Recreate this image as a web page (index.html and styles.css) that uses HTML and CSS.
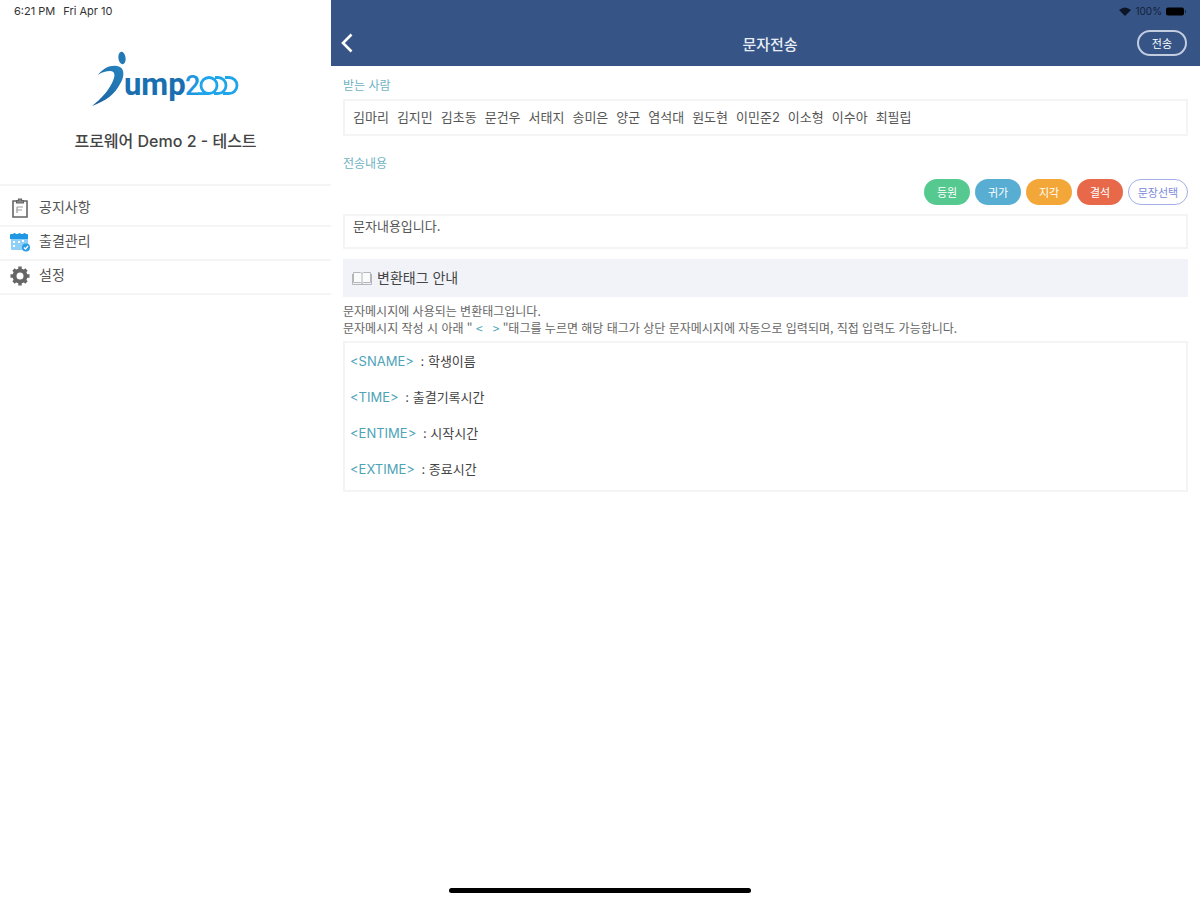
FILE: index.html
```
<!DOCTYPE html>
<html lang="ko">
<head>
    <meta charset="UTF-8">
    <meta name="viewport" content="width=device-width, initial-scale=1">
    <title>문자전송</title>
    <link rel="stylesheet" href="styles.css">
</head>
<body>
    <div class="app">
        <aside class="sidebar">
            <div class="status">
                <span>6:21 PM</span>
                <span>Fri Apr 10</span>
            </div>
            <div class="brand">
                <svg class="logo" width="150" height="58" viewBox="90 50 150 58" role="img" aria-label="Jump2000">
                    <defs>
                        <linearGradient id="body" x1="0" y1="1" x2="1" y2="0">
                            <stop offset="0" stop-color="#1c5f9e"/>
                            <stop offset="1" stop-color="#2584c0"/>
                        </linearGradient>
                    </defs>
                    <ellipse cx="121" cy="58" rx="3.6" ry="6.2" fill="#2279b5" transform="rotate(-8 121 58)"/>
                    <path d="M97 75 C103 67 112 64 119 67 C124 70 123 78 119 84 C114 94 105 101 91 106 C101 98 107 91 111 83 C115 75 114 71 109 71 C105 71 101 72 97 75 Z" fill="url(#body)"/>
                    <text class="logo-ump" x="123" y="95">ump</text>
                    <text class="logo-two" x="184" y="95">2</text>
                    <g fill="none" stroke="#1fa5ea" stroke-width="2.8">
                        <path d="M197 93.600 H208"/>
                        <circle cx="208" cy="85.500" r="8"/>
                        <path d="M214 77.500 H217 A8 8 0 0 1 217 93.500 H213"/>
                        <path d="M224 77.500 H228 A8 8 0 0 1 228 93.500 H222"/>
                    </g>
                </svg>
                <h1 class="site-name">프로웨어 Demo 2 - 테스트</h1>
            </div>
            <nav class="menu">
                <a class="menu-item" href="#">
                    <svg width="20" height="20" viewBox="0 0 20 20" fill="none" stroke="#666" stroke-width="1.6">
                        <path d="M6 3 H3 V19 H17 V3 H14"/>
                        <path d="M6.500 2.500 H8.500 V1 H11.500 V2.500 H13.500 V5 H6.500 Z" fill="#888" stroke-width="1.200"/>
                        <path d="M7 9 H13 M7 12 H12 M7 9 V15" stroke-width="1.200" stroke="#999"/>
                    </svg>
                    <span>공지사항</span>
                </a>
                <a class="menu-item" href="#">
                    <svg width="20" height="20" viewBox="0 0 20 20">
                        <rect x="1" y="3" width="17" height="15" rx="1" fill="#8fd0f8"/>
                        <path d="M0 7 V3 Q0 2 1 2 H3 Q4.500 0 6 2 H8 Q9.500 0 11 2 H13 Q14.500 0 16 2 H17 Q18 2 18 3 V7 Z" fill="#1f97e2"/>
                        <path d="M3 10 H5 M8 10 H10 M3 14 H5 M12 9 H14" stroke="#fff" stroke-width="2"/>
                        <circle cx="16" cy="15.500" r="4" fill="#2b9de6"/>
                        <path d="M14 15.500 L15.500 17 L18 14" fill="none" stroke="#fff" stroke-width="1.200"/>
                    </svg>
                    <span>출결관리</span>
                </a>
                <a class="menu-item" href="#">
                    <svg width="20" height="20" viewBox="0 0 20 20">
                        <circle cx="10" cy="10" r="5.500" fill="none" stroke="#666" stroke-width="4"/>
                        <path d="M10 0.500 V4 M10 16 V19.500 M0.500 10 H4 M16 10 H19.500 M3.500 3.500 L6 6 M14 14 L16.500 16.500 M3.500 16.500 L6 14 M14 6 L16.500 3.500" stroke="#666" stroke-width="3.400"/>
                    </svg>
                    <span>설정</span>
                </a>
            </nav>
        </aside>

        <main class="content">
            <header class="topbar">
                <div class="status status-right">
                    <svg width="12" height="9" viewBox="0 0 12 9"><path d="M0 3 Q6 -2 12 3 L6 9 Z" fill="#0c1626"/></svg>
                    <span>100%</span>
                    <svg width="21" height="9" viewBox="0 0 21 9"><rect x="0" y="0.500" width="18" height="8" rx="2" fill="#000"/><path d="M19.500 3 V6" stroke="#1c2c48"/></svg>
                </div>
                <div class="title-row">
                    <button class="back" type="button" aria-label="뒤로">
                        <svg width="12" height="20" viewBox="0 0 12 20" fill="none" stroke="#fff" stroke-width="2.600"><path d="M10.500 1.500 L2 10 L10.500 18.500"/></svg>
                    </button>
                    <h2 class="title">문자전송</h2>
                    <button class="send" type="button">전송</button>
                </div>
            </header>

            <form class="form">
                <h3 class="label">받는 사람</h3>
                <div class="receivers">
                    <span>김마리</span>
                    <span>김지민</span>
                    <span>김초동</span>
                    <span>문건우</span>
                    <span>서태지</span>
                    <span>송미은</span>
                    <span>양군</span>
                    <span>염석대</span>
                    <span>원도현</span>
                    <span>이민준2</span>
                    <span>이소형</span>
                    <span>이수아</span>
                    <span>최필립</span>
                </div>

                <label class="label label-message" for="message">전송내용</label>
                <div class="presets">
                    <button class="preset green" type="button">등원</button>
                    <button class="preset blue" type="button">귀가</button>
                    <button class="preset orange" type="button">지각</button>
                    <button class="preset red" type="button">결석</button>
                    <button class="preset outline" type="button">문장선택</button>
                </div>
                <textarea class="message" id="message" rows="1">문자내용입니다.</textarea>

                <div class="guide-title">
                    <svg width="20" height="14" viewBox="0 0 20 14" fill="#fafafa" stroke="#b4b6ba"><path d="M1.500 1.500 H8.500 L10 2.500 L11.500 1.500 H18.500 V11.500 H11.500 L10 12.500 L8.500 11.500 H1.500 Z M10 2.500 V12"/><path d="M0.500 3 V13.500 H19.500 V3" fill="none"/></svg>
                    <h3>변환태그 안내</h3>
                </div>
                <p class="guide-text">문자메시지에 사용되는 변환태그입니다.<br>문자메시지 작성 시 아래 " <span class="tag">&lt;&nbsp; &nbsp;&gt;</span> "태그를 누르면 해당 태그가 상단 문자메시지에 자동으로 입력되며, 직접 입력도 가능합니다.</p>
                <ul class="tags">
                    <li><button class="tag" type="button">&lt;SNAME&gt;</button> : 학생이름</li>
                    <li><button class="tag" type="button">&lt;TIME&gt;</button> : 출결기록시간</li>
                    <li><button class="tag" type="button">&lt;ENTIME&gt;</button> : 시작시간</li>
                    <li><button class="tag" type="button">&lt;EXTIME&gt;</button> : 종료시간</li>
                </ul>
            </form>
        </main>
    </div>
    <div class="home-bar"></div>
</body>
</html>
```
FILE: styles.css
```
* {
    box-sizing: border-box;
}

body {
    margin: 0;
    background: #fff;
    color: #555;
    font-family: Inter, "Noto Sans CJK KR", sans-serif;
    font-size: 13px;
}

h1, h2, h3, p, ul {
    margin: 0;
    padding: 0;
    font-weight: 400;
}

button {
    margin: 0;
    padding: 0;
    border: 0;
    background: none;
    font-family: inherit;
    cursor: pointer;
}

svg {
    flex: none;
}

.app {
    display: flex;
    min-height: 100vh;
}

/* status bar */
.status {
    display: flex;
    align-items: center;
    gap: 8px;
    height: 22px;
    padding: 0 14px;
    font-size: 11px;
    color: #333;
}

.status-right {
    justify-content: flex-end;
    gap: 4px;
    padding: 0 13px;
    font-size: 10px;
    color: #14203a;
}

/* left menu */
.sidebar {
    flex: 0 0 331px;
}

.brand {
    display: flex;
    flex-direction: column;
    align-items: center;
    gap: 20px;
    padding: 28px 0 30px;
}

.logo {
    display: block;
}

.logo-ump {
    font-family: Roboto, sans-serif;
    font-size: 31px;
    font-weight: 700;
    fill: #1a6fb0;
}

.logo-two {
    font-family: Roboto, sans-serif;
    font-size: 27px;
    font-weight: 500;
    fill: #1f97de;
}

.site-name {
    font-size: 16px;
    line-height: 26px;
    font-weight: 500;
    color: #444;
}

.menu {
    border-top: 2px solid #f5f5f5;
    padding-top: 7px;
}

.menu-item {
    display: flex;
    align-items: center;
    gap: 9px;
    height: 34px;
    padding: 0 10px 3px;
    border-bottom: 2px solid #f5f5f5;
    font-size: 14px;
    color: #555;
    text-decoration: none;
}

.menu-item span {
    padding-bottom: 4px;
}

/* right side */
.content {
    flex: 1;
    min-width: 0;
}

.topbar {
    height: 66px;
    background: #365586;
}

.title-row {
    display: flex;
    align-items: center;
    justify-content: space-between;
    height: 42px;
    padding: 0 13px 0 10px;
}

.back {
    width: 62px;
    text-align: left;
}

.back svg {
    display: block;
}

.title {
    font-size: 15px;
    font-weight: 500;
    color: #e8edf5;
}

.send {
    width: 50px;
    height: 26px;
    border: 2px solid #c3cde0;
    border-radius: 13px;
    font-size: 11px;
    color: #fff;
}

.form {
    padding: 11px 12px;
}

.label {
    display: block;
    font-size: 12px;
    line-height: 18px;
    color: #6fb1c1;
}

.label-message {
    padding-top: 19px;
}

.receivers {
    display: flex;
    flex-wrap: wrap;
    gap: 0 8px;
    margin-top: 4px;
    padding: 7px 8px;
    border: 2px solid #f4f4f4;
    line-height: 19px;
}

.presets {
    display: flex;
    justify-content: flex-end;
    gap: 5px;
    margin: 6px 0 9px;
}

.preset {
    width: 46px;
    height: 26px;
    border-radius: 13px;
    font-size: 11px;
    color: #fff;
}

.green {
    background: #55c98f;
}

.blue {
    background: #58aed2;
}

.orange {
    background: #f2a738;
}

.red {
    background: #e8694a;
}

.outline {
    width: 60px;
    border: 1px solid #a3aeea;
    background: #fff;
    color: #7d8bdc;
}

.message {
    display: block;
    width: 100%;
    height: 35px;
    padding: 1px 8px;
    border: 2px solid #f4f4f4;
    font-family: inherit;
    font-size: 13px;
    line-height: 19px;
    color: #555;
    resize: none;
    outline: none;
}

.guide-title {
    display: flex;
    align-items: center;
    gap: 5px;
    height: 38px;
    margin-top: 10px;
    padding: 0 9px;
    background: #f1f3f8;
}

.guide-title h3 {
    padding-bottom: 3px;
    font-family: "Noto Sans CJK KR", sans-serif;
    font-size: 14px;
    color: #444;
}

.guide-text {
    padding: 5px 0;
    font-family: "Noto Sans CJK KR", sans-serif;
    font-size: 12px;
    line-height: 17px;
    color: #666;
}

.tag {
    color: #4da3b8;
}

.tags {
    padding: 0 5px 3px;
    border: 2px solid #f4f4f4;
    list-style: none;
    color: #444;
}

.tags li {
    line-height: 36px;
}

.tags .tag {
    margin-right: 3px;
    font-size: 13px;
}

/* home indicator */
.home-bar {
    position: fixed;
    bottom: 7px;
    left: 50%;
    width: 302px;
    height: 5px;
    margin-left: -151px;
    border-radius: 3px;
    background: #000;
}
```
